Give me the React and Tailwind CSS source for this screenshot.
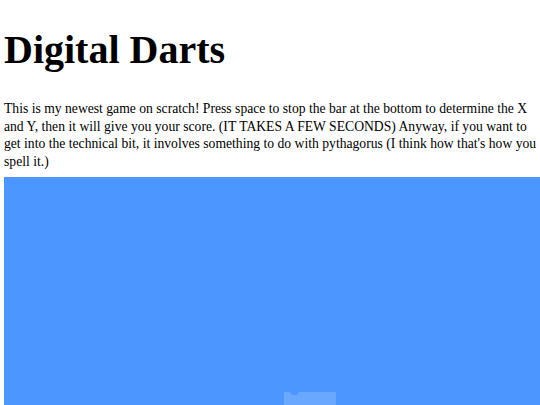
import React from 'react'

// little scratch-style block peeking up from the bottom of the stage
const BlockTab = () => (
  <svg width="52" height="20" viewBox="0 0 52 20" className="block">
    <path d="M0 0 H6 L8 3 H13 L15 0 H52 V20 H0 Z" fill="#6aa7ff" />
  </svg>
)

const App = () => {
  return (
    <div className="h-[405px] bg-white px-[4px] pt-[27px] font-['Liberation_Serif',serif] text-black overflow-hidden">
      <h1 className="text-[40px] font-bold leading-[46px]">Digital Darts</h1>
      <p className="mt-[27px] w-[540px] text-[13.65px] leading-[17.5px]">
        This is my newest game on scratch! Press space to stop the bar at the bottom to determine the X
        <br />
        and Y, then it will give you your score. (IT TAKES A FEW SECONDS) Anyway, if you want to
        <br />
        get into the technical bit, it involves something to do with pythagorus (I think how that's how you
        <br />
        spell it.)
      </p>
      <div className="mt-[7px] h-[260px] w-[560px] bg-[#4c97ff] pt-[215px]">
        <div className="ml-[280px]">
          <BlockTab />
        </div>
      </div>
    </div>
  )
}

export default App
